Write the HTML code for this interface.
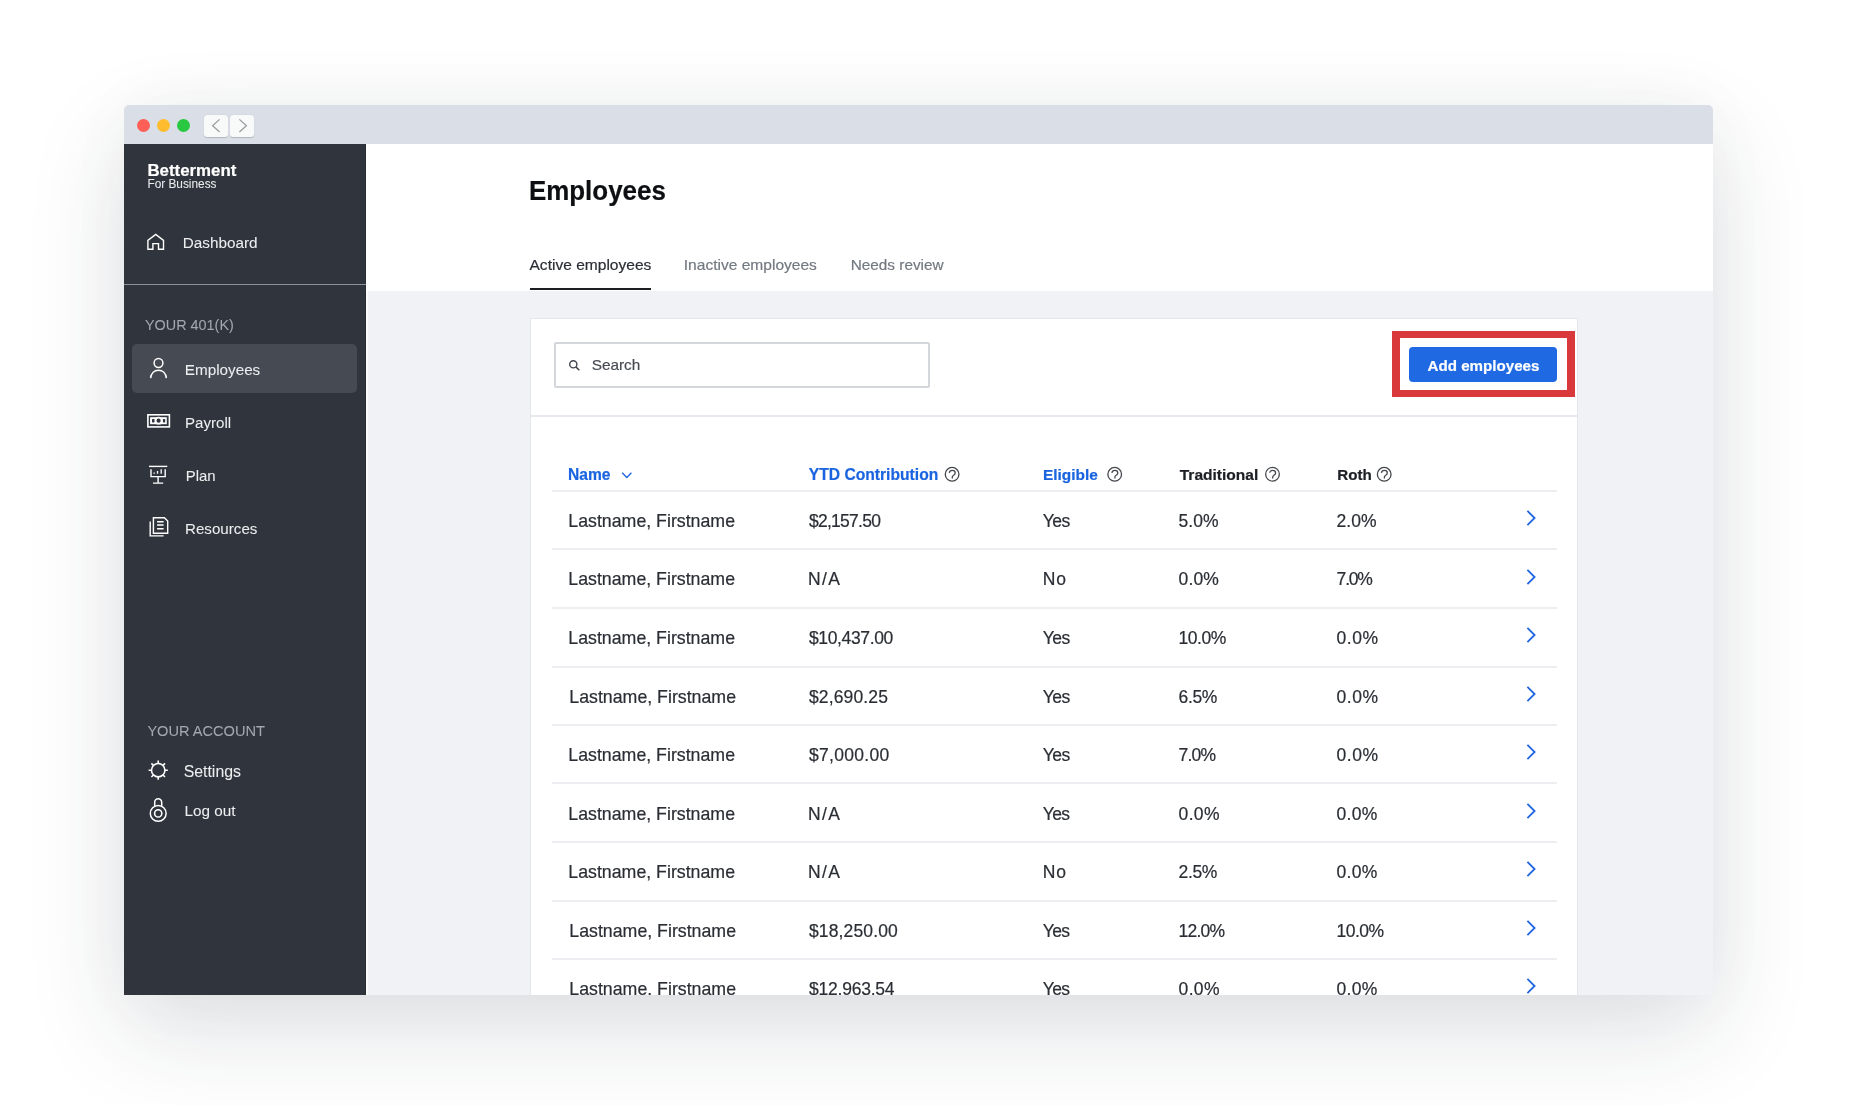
<!DOCTYPE html>
<html><head><meta charset="utf-8">
<style>
*{margin:0;padding:0;box-sizing:border-box}
html,body{width:1850px;height:1105px;overflow:hidden;background:#fff;font-family:"Liberation Sans",sans-serif}
.abs{position:absolute}
.ic{position:absolute;overflow:visible}
.t{position:absolute;white-space:nowrap;line-height:1;-webkit-text-stroke-width:0.2px}
#shadow{position:absolute;left:124px;top:105px;width:1589px;height:890px;border-radius:5px 5px 0 0;
 box-shadow:0 36px 100px rgba(30,40,60,0.14),0 0 70px rgba(30,40,60,0.035)}
#clip{position:absolute;left:124px;top:105px;width:1589px;height:890px;border-radius:5px 5px 0 0;overflow:hidden}
#inner{position:absolute;left:-124px;top:-105px;width:1850px;height:1105px;will-change:transform}
</style></head><body>
<div id="shadow"></div>
<div id="clip"><div id="inner">
<div class="abs" style="left:124px;top:105px;width:1589px;height:39px;background:#dadee6"></div>
<div class="abs" style="left:137px;top:118.9px;width:13px;height:13px;border-radius:50%;background:#fe5f57"></div>
<div class="abs" style="left:157px;top:118.9px;width:13px;height:13px;border-radius:50%;background:#febc2e"></div>
<div class="abs" style="left:177px;top:118.9px;width:13px;height:13px;border-radius:50%;background:#28c840"></div>
<div class="abs" style="left:203.5px;top:114.8px;width:24.5px;height:22px;background:#f8f9f9;border-radius:3px;box-shadow:0 0.8px 1px rgba(0,0,0,0.18)"></div>
<div class="abs" style="left:229.6px;top:114.8px;width:24.6px;height:22px;background:#f8f9f9;border-radius:3px;box-shadow:0 0.8px 1px rgba(0,0,0,0.18)"></div>
<svg class="ic" style="left:203.5px;top:114.8px" width="51" height="22" viewBox="0 0 51 22"><path d="M15.6 4.4L8.6 10.7L15.6 17M35.4 4.4L42.4 10.7L35.4 17" fill="none" stroke="#989a9d" stroke-width="1.2"/></svg>
<div class="abs" style="left:124px;top:144px;width:242px;height:851px;background:#30353d"></div>
<div class="abs" style="left:366px;top:144px;width:1347px;height:851px;background:#f1f2f6"></div>
<div class="abs" style="left:366px;top:144px;width:1347px;height:146.5px;background:#fff"></div>
<div class="abs" style="left:366px;top:290px;width:2px;height:705px;background:#fbfbfc"></div>
<div class="abs" style="left:365px;top:144px;width:1px;height:851px;background:#282d34"></div>
<div class="t" style="left:147.40px;top:163px;font-size:16.85px;color:#fff;font-weight:700;">Betterment</div>
<div class="t" style="left:147.40px;top:179px;font-size:11.85px;color:#e9ebed;-webkit-text-stroke-width:0.05px;">For Business</div>
<svg class="ic" style="left:146px;top:233px" width="20" height="18" viewBox="0 0 20 18"><path d="M1.9 16.2V7.4L9.7 1.5L17.5 7.4V16.2H12.5V10.6H6.9V16.2Z" fill="none" stroke="#fff" stroke-width="1.4" stroke-linejoin="miter"/></svg>
<div class="t" style="left:182.80px;top:235px;font-size:15.3px;color:#eceef0;-webkit-text-stroke-width:0.05px;">Dashboard</div>
<div class="abs" style="left:124px;top:283.6px;width:242px;height:1.6px;background:#8e9298"></div>
<div class="t" style="left:145.00px;top:318px;font-size:14.4px;color:#a4a8ae;-webkit-text-stroke-width:0.05px;">YOUR 401(K)</div>
<div class="abs" style="left:131.5px;top:343.5px;width:225.5px;height:49.5px;background:#464a52;border-radius:5px"></div>
<svg class="ic" style="left:148px;top:356px" width="22" height="24" viewBox="0 0 22 24"><circle cx="10.5" cy="7" r="4.4" fill="none" stroke="#fff" stroke-width="1.5"/><path d="M2.6 22.2C3.2 17.3 6.5 14.3 10.5 14.3S17.8 17.3 18.4 22.2" fill="none" stroke="#fff" stroke-width="1.6"/></svg>
<div class="t" style="left:184.80px;top:362px;font-size:15.25px;color:#eceef0;-webkit-text-stroke-width:0.05px;">Employees</div>
<svg class="ic" style="left:146px;top:413px" width="26" height="16" viewBox="0 0 26 16"><rect x="1.9" y="1.8" width="21.5" height="12.1" fill="none" stroke="#fff" stroke-width="1.6"/><rect x="4.1" y="4.2" width="16.7" height="7" fill="#fff"/><circle cx="12.6" cy="7.7" r="3.9" fill="#fff"/><circle cx="12.6" cy="7.7" r="2.1" fill="#30353d"/><rect x="6" y="6" width="2.5" height="3.4" rx="0.6" fill="#30353d"/><rect x="16.9" y="6" width="2.3" height="3.4" rx="0.6" fill="#30353d"/></svg>
<div class="t" style="left:185.00px;top:415px;font-size:15.1px;color:#eceef0;-webkit-text-stroke-width:0.05px;">Payroll</div>
<svg class="ic" style="left:148px;top:464px" width="22" height="22" viewBox="0 0 22 22"><path d="M1 2.4H19.3" stroke="#fff" stroke-width="1.4"/><path d="M3 5.2V12.6H17.2V5.2" fill="none" stroke="#fff" stroke-width="1.4"/><path d="M10.1 12.6V18.7M5 19.1H15.2" stroke="#fff" stroke-width="1.4"/><path d="M6.2 8.4V9.8M9.5 7V9.8M13.2 5.2V9.8" stroke="#fff" stroke-width="1.3"/></svg>
<div class="t" style="left:185.70px;top:469px;font-size:14.95px;color:#eceef0;-webkit-text-stroke-width:0.05px;">Plan</div>
<svg class="ic" style="left:148px;top:515px" width="22" height="23" viewBox="0 0 22 23"><path d="M2.2 6.4V20.9H15.6" fill="none" stroke="#fff" stroke-width="1.4"/><path d="M5.4 2.7H16.4L19.7 6V18.2H5.4Z" fill="none" stroke="#fff" stroke-width="1.4"/><path d="M9.1 6.8H15.6M9.1 10H15.6M9.1 13.7H15.6" stroke="#fff" stroke-width="1.4"/></svg>
<div class="t" style="left:185.00px;top:521px;font-size:15.15px;color:#eceef0;-webkit-text-stroke-width:0.05px;">Resources</div>
<div class="t" style="left:147.40px;top:724px;font-size:14.6px;color:#a4a8ae;-webkit-text-stroke-width:0.05px;">YOUR ACCOUNT</div>
<svg class="ic" style="left:147.8px;top:760px" width="21" height="21" viewBox="0 0 21 21"><circle cx="10.2" cy="10.2" r="6.7" fill="none" stroke="#fff" stroke-width="1.6"/><path d="M17.00 10.20L19.80 10.20M15.01 15.01L16.99 16.99M10.20 17.00L10.20 19.80M5.39 15.01L3.41 16.99M3.40 10.20L0.60 10.20M5.39 5.39L3.41 3.41M10.20 3.40L10.20 0.60M15.01 5.39L16.99 3.41" stroke="#fff" stroke-width="1.6"/></svg>
<div class="t" style="left:183.70px;top:764px;font-size:15.85px;color:#eceef0;-webkit-text-stroke-width:0.05px;">Settings</div>
<svg class="ic" style="left:148px;top:797px" width="21" height="26" viewBox="0 0 21 26"><path d="M6.7 9.5V5.3A3.5 3.5 0 0 1 13.7 5.3V9.5" fill="none" stroke="#fff" stroke-width="1.5"/><circle cx="10.2" cy="16.4" r="7.9" fill="none" stroke="#fff" stroke-width="1.5"/><circle cx="10.2" cy="16.4" r="3.6" fill="none" stroke="#fff" stroke-width="1.6"/></svg>
<div class="t" style="left:184.50px;top:803px;font-size:15.3px;color:#eceef0;-webkit-text-stroke-width:0.05px;">Log out</div>

<div class="t" style="left:528.90px;top:179px;font-size:25.95px;color:#0d0f12;font-weight:700;transform:scaleY(1.055);transform-origin:0 85%;">Employees</div>
<div class="t" style="left:529.50px;top:257px;font-size:15.55px;color:#2a2e34;">Active employees</div>
<div class="t" style="left:683.80px;top:257px;font-size:15.55px;color:#737981;">Inactive employees</div>
<div class="t" style="left:850.70px;top:257px;font-size:15.35px;color:#737981;">Needs review</div>
<div class="abs" style="left:529.5px;top:287.8px;width:121.5px;height:2.6px;background:#1b1e22"></div>
<div class="abs" style="left:530px;top:318px;width:1048px;height:700px;background:#fff;border:1px solid #e3e6eb"></div>
<div class="abs" style="left:531px;top:415px;width:1046px;height:1.5px;background:#e6e9ee"></div>
<div class="abs" style="left:554px;top:342px;width:376px;height:46px;border:2px solid #d3d6db;border-radius:2px;background:#fff"></div>
<svg class="ic" style="left:567px;top:358px" width="15" height="15" viewBox="0 0 15 15"><circle cx="6.3" cy="6.3" r="3.6" fill="none" stroke="#40454c" stroke-width="1.4"/><path d="M8.9 8.9L12.3 12.3" stroke="#40454c" stroke-width="1.5"/></svg>
<div class="t" style="left:591.70px;top:357px;font-size:15.35px;color:#474c54;">Search</div>
<div class="abs" style="left:1392px;top:331.3px;width:183px;height:65.5px;border:8px solid #da393b;border-width:7.3px 8.5px 7.6px 8.4px"></div>
<div class="abs" style="left:1409.3px;top:347px;width:147.8px;height:35px;background:#1f69e2;border-radius:4px"></div>
<div class="t" style="left:1427.60px;top:358px;font-size:15.13px;color:#fff;font-weight:700;">Add employees</div>
<div class="t" style="left:568.00px;top:467px;font-size:15.6px;color:#1a64e0;font-weight:700;">Name</div>
<svg class="ic" style="left:620px;top:470px" width="14" height="10" viewBox="0 0 14 10"><path d="M2.2 2.8L6.8 7.5L11.4 2.8" fill="none" stroke="#1a64e0" stroke-width="1.3"/></svg>
<div class="t" style="left:808.80px;top:467px;font-size:15.65px;color:#1a64e0;font-weight:700;">YTD Contribution</div>
<div class="t" style="left:1043.00px;top:467px;font-size:15.4px;color:#1a64e0;font-weight:700;">Eligible</div>
<div class="t" style="left:1179.70px;top:467px;font-size:15.55px;color:#1c1f24;font-weight:700;">Traditional</div>
<div class="t" style="left:1337.20px;top:467px;font-size:15.2px;color:#1c1f24;font-weight:700;">Roth</div>
<svg class="ic" style="left:943px;top:465px" width="18" height="18" viewBox="0 0 18 18"><g transform="translate(0.10 0.30)"><circle cx="9" cy="9" r="6.85" fill="none" stroke="#45484d" stroke-width="1.3"/><path d="M6.2 7.5C6.4 5.9 7.7 5.1 9.2 5.1C10.9 5.1 12.1 6.2 12.1 7.7C12.1 9 11.2 9.7 10.2 10.2C9.5 10.6 9.2 11 9.2 11.8V13.3" fill="none" stroke="#45484d" stroke-width="1.3"/></g></svg>
<svg class="ic" style="left:1105px;top:465px" width="18" height="18" viewBox="0 0 18 18"><g transform="translate(0.70 0.30)"><circle cx="9" cy="9" r="6.85" fill="none" stroke="#45484d" stroke-width="1.3"/><path d="M6.2 7.5C6.4 5.9 7.7 5.1 9.2 5.1C10.9 5.1 12.1 6.2 12.1 7.7C12.1 9 11.2 9.7 10.2 10.2C9.5 10.6 9.2 11 9.2 11.8V13.3" fill="none" stroke="#45484d" stroke-width="1.3"/></g></svg>
<svg class="ic" style="left:1263px;top:465px" width="18" height="18" viewBox="0 0 18 18"><g transform="translate(0.50 0.25)"><circle cx="9" cy="9" r="6.85" fill="none" stroke="#45484d" stroke-width="1.3"/><path d="M6.2 7.5C6.4 5.9 7.7 5.1 9.2 5.1C10.9 5.1 12.1 6.2 12.1 7.7C12.1 9 11.2 9.7 10.2 10.2C9.5 10.6 9.2 11 9.2 11.8V13.3" fill="none" stroke="#45484d" stroke-width="1.3"/></g></svg>
<svg class="ic" style="left:1375px;top:465px" width="18" height="18" viewBox="0 0 18 18"><g transform="translate(0.20 0.30)"><circle cx="9" cy="9" r="6.85" fill="none" stroke="#45484d" stroke-width="1.3"/><path d="M6.2 7.5C6.4 5.9 7.7 5.1 9.2 5.1C10.9 5.1 12.1 6.2 12.1 7.7C12.1 9 11.2 9.7 10.2 10.2C9.5 10.6 9.2 11 9.2 11.8V13.3" fill="none" stroke="#45484d" stroke-width="1.3"/></g></svg>
<div class="abs" style="left:552px;top:490px;width:1005px;height:2px;background:#edeef2"></div>
<div class="abs" style="left:552px;top:548px;width:1005px;height:2px;background:#edeef2"></div>
<div class="abs" style="left:552px;top:607px;width:1005px;height:2px;background:#edeef2"></div>
<div class="abs" style="left:552px;top:666px;width:1005px;height:2px;background:#edeef2"></div>
<div class="abs" style="left:552px;top:724px;width:1005px;height:2px;background:#edeef2"></div>
<div class="abs" style="left:552px;top:782px;width:1005px;height:2px;background:#edeef2"></div>
<div class="abs" style="left:552px;top:841px;width:1005px;height:2px;background:#edeef2"></div>
<div class="abs" style="left:552px;top:900px;width:1005px;height:2px;background:#edeef2"></div>
<div class="abs" style="left:552px;top:958px;width:1005px;height:2px;background:#edeef2"></div>
<div class="t" style="left:568.30px;top:513px;font-size:17.75px;color:#2a2e34;">Lastname, Firstname</div>
<div class="t" style="left:809.00px;top:513px;font-size:17.5px;color:#2a2e34;letter-spacing:-0.74px;">$2,157.50</div>
<div class="t" style="left:1042.70px;top:513px;font-size:17.5px;color:#2a2e34;letter-spacing:-0.5px;">Yes</div>
<div class="t" style="left:1178.60px;top:513px;font-size:17.5px;color:#2a2e34;">5.0%</div>
<div class="t" style="left:1336.60px;top:513px;font-size:17.5px;color:#2a2e34;">2.0%</div>
<svg class="ic" style="left:1523.00px;top:508.00px" width="16" height="20" viewBox="0 0 16 20"><path d="M4.4 2.8L11.6 10L4.4 17.2" fill="none" stroke="#1f66e0" stroke-width="1.8"/></svg>
<div class="t" style="left:568.30px;top:571px;font-size:17.75px;color:#2a2e34;">Lastname, Firstname</div>
<div class="t" style="left:808.00px;top:571px;font-size:17.5px;color:#2a2e34;letter-spacing:1.4px;">N/A</div>
<div class="t" style="left:1042.70px;top:571px;font-size:17.5px;color:#2a2e34;letter-spacing:1.0px;">No</div>
<div class="t" style="left:1178.60px;top:571px;font-size:17.5px;color:#2a2e34;letter-spacing:0.13px;">0.0%</div>
<div class="t" style="left:1336.60px;top:571px;font-size:17.5px;color:#2a2e34;letter-spacing:-1.2px;">7.0%</div>
<svg class="ic" style="left:1523.00px;top:566.55px" width="16" height="20" viewBox="0 0 16 20"><path d="M4.4 2.8L11.6 10L4.4 17.2" fill="none" stroke="#1f66e0" stroke-width="1.8"/></svg>
<div class="t" style="left:568.30px;top:630px;font-size:17.75px;color:#2a2e34;">Lastname, Firstname</div>
<div class="t" style="left:809.00px;top:630px;font-size:17.5px;color:#2a2e34;letter-spacing:-0.36px;">$10,437.00</div>
<div class="t" style="left:1042.70px;top:630px;font-size:17.5px;color:#2a2e34;letter-spacing:-0.5px;">Yes</div>
<div class="t" style="left:1178.60px;top:630px;font-size:17.5px;color:#2a2e34;letter-spacing:-0.5px;">10.0%</div>
<div class="t" style="left:1336.60px;top:630px;font-size:17.5px;color:#2a2e34;letter-spacing:0.53px;">0.0%</div>
<svg class="ic" style="left:1523.00px;top:625.10px" width="16" height="20" viewBox="0 0 16 20"><path d="M4.4 2.8L11.6 10L4.4 17.2" fill="none" stroke="#1f66e0" stroke-width="1.8"/></svg>
<div class="t" style="left:569.30px;top:689px;font-size:17.75px;color:#2a2e34;">Lastname, Firstname</div>
<div class="t" style="left:809.00px;top:689px;font-size:17.5px;color:#2a2e34;letter-spacing:0.14px;">$2,690.25</div>
<div class="t" style="left:1042.70px;top:689px;font-size:17.5px;color:#2a2e34;letter-spacing:-0.5px;">Yes</div>
<div class="t" style="left:1178.60px;top:689px;font-size:17.5px;color:#2a2e34;letter-spacing:-0.4px;">6.5%</div>
<div class="t" style="left:1336.60px;top:689px;font-size:17.5px;color:#2a2e34;letter-spacing:0.53px;">0.0%</div>
<svg class="ic" style="left:1523.00px;top:683.65px" width="16" height="20" viewBox="0 0 16 20"><path d="M4.4 2.8L11.6 10L4.4 17.2" fill="none" stroke="#1f66e0" stroke-width="1.8"/></svg>
<div class="t" style="left:568.30px;top:747px;font-size:17.75px;color:#2a2e34;">Lastname, Firstname</div>
<div class="t" style="left:809.00px;top:747px;font-size:17.5px;color:#2a2e34;letter-spacing:0.3px;">$7,000.00</div>
<div class="t" style="left:1042.70px;top:747px;font-size:17.5px;color:#2a2e34;letter-spacing:-0.5px;">Yes</div>
<div class="t" style="left:1178.60px;top:747px;font-size:17.5px;color:#2a2e34;letter-spacing:-0.83px;">7.0%</div>
<div class="t" style="left:1336.60px;top:747px;font-size:17.5px;color:#2a2e34;letter-spacing:0.53px;">0.0%</div>
<svg class="ic" style="left:1523.00px;top:742.20px" width="16" height="20" viewBox="0 0 16 20"><path d="M4.4 2.8L11.6 10L4.4 17.2" fill="none" stroke="#1f66e0" stroke-width="1.8"/></svg>
<div class="t" style="left:568.30px;top:806px;font-size:17.75px;color:#2a2e34;">Lastname, Firstname</div>
<div class="t" style="left:808.00px;top:806px;font-size:17.5px;color:#2a2e34;letter-spacing:1.4px;">N/A</div>
<div class="t" style="left:1042.70px;top:806px;font-size:17.5px;color:#2a2e34;letter-spacing:-0.6px;">Yes</div>
<div class="t" style="left:1178.60px;top:806px;font-size:17.5px;color:#2a2e34;letter-spacing:0.33px;">0.0%</div>
<div class="t" style="left:1336.60px;top:806px;font-size:17.5px;color:#2a2e34;letter-spacing:0.27px;">0.0%</div>
<svg class="ic" style="left:1523.00px;top:800.75px" width="16" height="20" viewBox="0 0 16 20"><path d="M4.4 2.8L11.6 10L4.4 17.2" fill="none" stroke="#1f66e0" stroke-width="1.8"/></svg>
<div class="t" style="left:568.30px;top:864px;font-size:17.75px;color:#2a2e34;">Lastname, Firstname</div>
<div class="t" style="left:808.00px;top:864px;font-size:17.5px;color:#2a2e34;letter-spacing:1.4px;">N/A</div>
<div class="t" style="left:1042.70px;top:864px;font-size:17.5px;color:#2a2e34;letter-spacing:1.0px;">No</div>
<div class="t" style="left:1178.60px;top:864px;font-size:17.5px;color:#2a2e34;letter-spacing:-0.4px;">2.5%</div>
<div class="t" style="left:1336.60px;top:864px;font-size:17.5px;color:#2a2e34;letter-spacing:0.27px;">0.0%</div>
<svg class="ic" style="left:1523.00px;top:859.30px" width="16" height="20" viewBox="0 0 16 20"><path d="M4.4 2.8L11.6 10L4.4 17.2" fill="none" stroke="#1f66e0" stroke-width="1.8"/></svg>
<div class="t" style="left:569.30px;top:923px;font-size:17.75px;color:#2a2e34;">Lastname, Firstname</div>
<div class="t" style="left:809.00px;top:923px;font-size:17.5px;color:#2a2e34;letter-spacing:0.14px;">$18,250.00</div>
<div class="t" style="left:1042.70px;top:923px;font-size:17.5px;color:#2a2e34;letter-spacing:-0.6px;">Yes</div>
<div class="t" style="left:1178.60px;top:923px;font-size:17.5px;color:#2a2e34;letter-spacing:-0.8px;">12.0%</div>
<div class="t" style="left:1336.60px;top:923px;font-size:17.5px;color:#2a2e34;letter-spacing:-0.55px;">10.0%</div>
<svg class="ic" style="left:1523.00px;top:917.85px" width="16" height="20" viewBox="0 0 16 20"><path d="M4.4 2.8L11.6 10L4.4 17.2" fill="none" stroke="#1f66e0" stroke-width="1.8"/></svg>
<div class="t" style="left:569.30px;top:981px;font-size:17.75px;color:#2a2e34;">Lastname, Firstname</div>
<div class="t" style="left:809.00px;top:981px;font-size:17.5px;color:#2a2e34;letter-spacing:-0.22px;">$12,963.54</div>
<div class="t" style="left:1042.70px;top:981px;font-size:17.5px;color:#2a2e34;letter-spacing:-0.6px;">Yes</div>
<div class="t" style="left:1178.60px;top:981px;font-size:17.5px;color:#2a2e34;letter-spacing:0.33px;">0.0%</div>
<div class="t" style="left:1336.60px;top:981px;font-size:17.5px;color:#2a2e34;letter-spacing:0.27px;">0.0%</div>
<svg class="ic" style="left:1523.00px;top:976.40px" width="16" height="20" viewBox="0 0 16 20"><path d="M4.4 2.8L11.6 10L4.4 17.2" fill="none" stroke="#1f66e0" stroke-width="1.8"/></svg>

</div></div>
</body></html>
